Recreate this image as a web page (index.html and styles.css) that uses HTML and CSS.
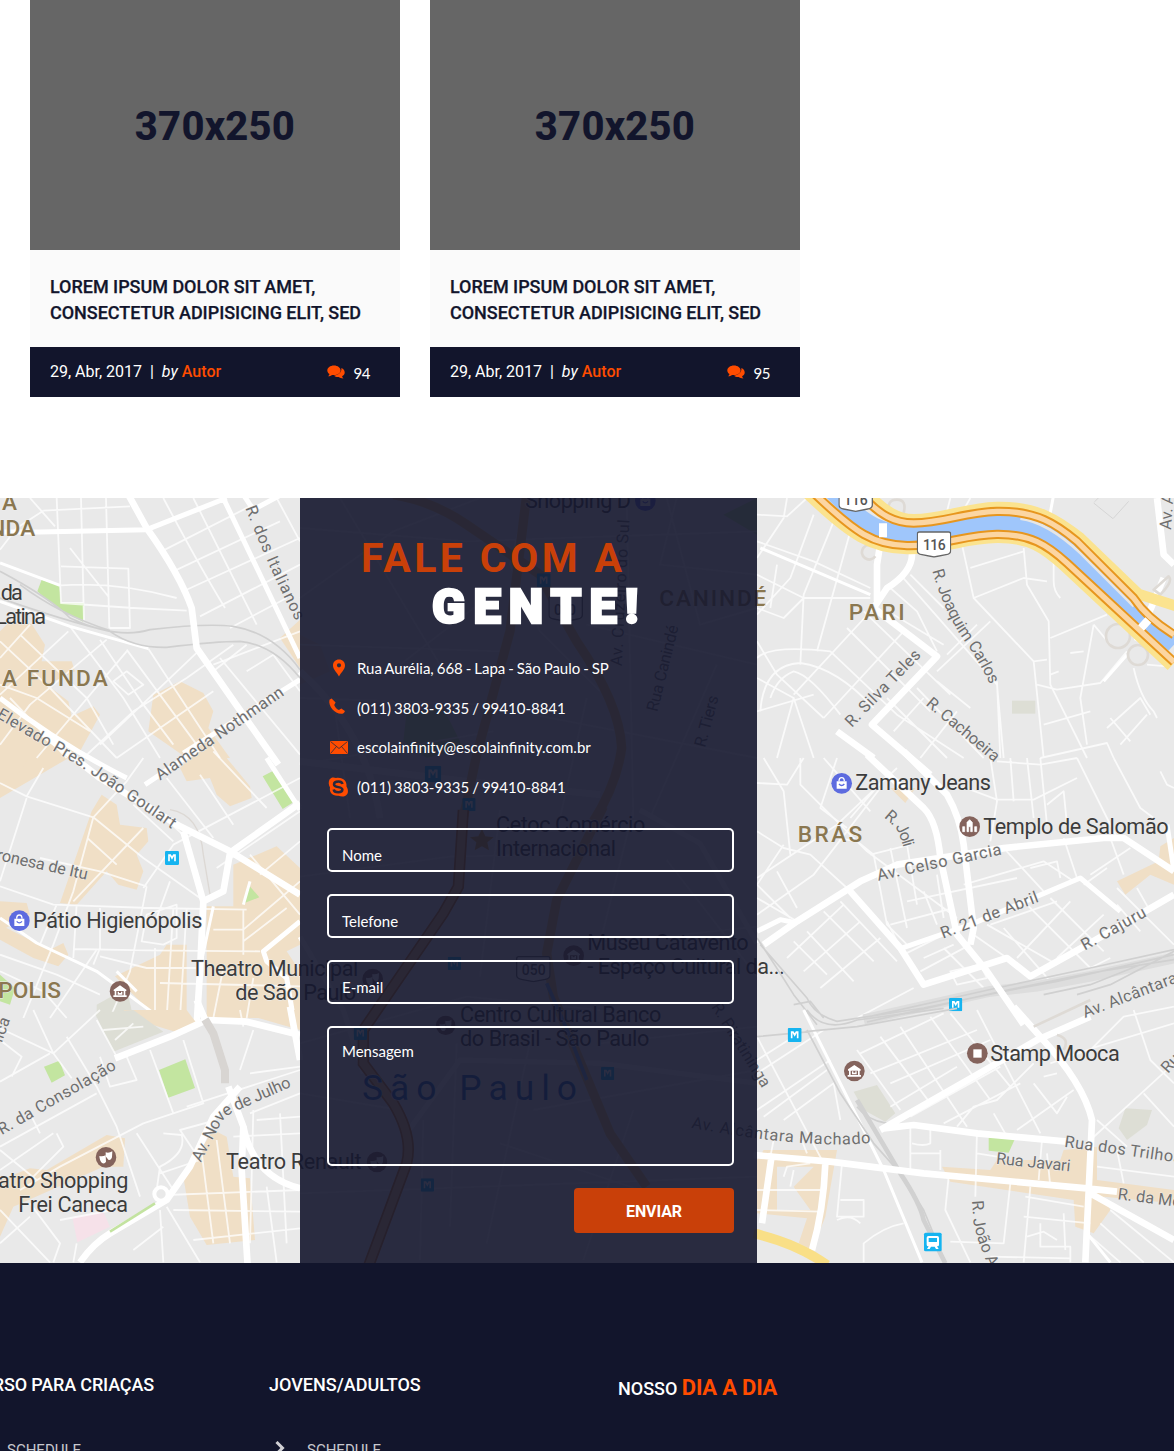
FILE: index.html
```html
<!DOCTYPE html>
<html lang="pt-BR">
<head>
<meta charset="utf-8">
<title>Escola Infinity</title>
<link rel="stylesheet" href="styles.css">
</head>
<body>
<svg class="defs" width="0" height="0">
  <symbol id="comments" viewBox="0 0 18 14"><path d="M7 .5C3.200.5.3 2.700.3 5.400c0 1.500.9 2.800 2.200 3.700-.2.900-.7 1.500-1.400 2.100 1.500 0 2.900-.5 4-1.300.6.1 1.200.2 1.900.2 3.700 0 6.600-2.100 6.600-4.700S10.700.5 7 .5z"/><path d="M14.400 3.100c.5 3.800-2.600 7-7.400 7.600 1.100.9 2.700 1.300 4.600 1.200 1.200.7 2.700 1.500 4.900 1.500-.8-.6-1.200-1.300-1.400-2.100 1.600-.8 2.600-2.100 2.600-3.700 0-2-1.300-3.600-3.300-4.500z"/></symbol>
  <symbol id="metro" viewBox="0 0 42 42"><rect width="42" height="42" rx="4" fill="#16b4f0"/><path d="M12 31V12h4l5 9 5-9h4v19" fill="none" stroke="#fff" stroke-width="5"/></symbol>
  <symbol id="museum" viewBox="0 0 64 64"><circle cx="32" cy="32" r="31" fill="#84635c"/><path d="M13 27 32 14l19 13v4h-3v13h4v5H12v-5h4V31h-3zM21 31v13h22V31z" fill="#fff" fill-rule="evenodd"/><path d="M25 33h4v4h6v-4h4v9H25z" fill="#fff"/></symbol>
  <symbol id="bag" viewBox="0 0 64 64"><circle cx="32" cy="32" r="31" fill="#5d6bdf"/><path d="M17 26h30v22H17z" fill="#fff"/><path d="M24 26q0-11 8-11t8 11" fill="none" stroke="#fff" stroke-width="4"/><path d="M24 34q8 9 16 0" fill="none" stroke="#5d6bdf" stroke-width="4"/></symbol>
  <symbol id="masks" viewBox="0 0 64 64"><circle cx="32" cy="32" r="31" fill="#84635c"/><path d="M31 17q10 3 20-3l-1 18q-3 10-11 7l-8-10z" fill="#fff"/><path d="M12 28q9 3 19-2l1 19q-4 8-12 4-7-6-8-21z" fill="#fff"/></symbol>
  <symbol id="shield116" viewBox="0 0 104 80"><path d="M8 3h88q6 0 6 6v50q0 10-14 12l-36 7-36-7Q2 69 2 59V9q0-6 6-6z" fill="#fff" stroke="#666" stroke-width="4"/></symbol>
</svg>

<section class="posts">
  <article class="post">
    <div class="post-image">370x250</div>
    <h3 class="post-title">LOREM IPSUM DOLOR SIT AMET,<br>CONSECTETUR ADIPISICING ELIT, SED</h3>
    <div class="post-meta">
      <span>29, Abr, 2017&nbsp; |&nbsp; <i>by</i> <b>Autor</b></span>
      <span class="count"><svg class="bubbles"><use href="#comments"/></svg>94</span>
    </div>
  </article>
  <article class="post">
    <div class="post-image">370x250</div>
    <h3 class="post-title">LOREM IPSUM DOLOR SIT AMET,<br>CONSECTETUR ADIPISICING ELIT, SED</h3>
    <div class="post-meta">
      <span>29, Abr, 2017&nbsp; |&nbsp; <i>by</i> <b>Autor</b></span>
      <span class="count"><svg class="bubbles"><use href="#comments"/></svg>95</span>
    </div>
  </article>
</section>

<section class="contact">
<svg class="map" viewBox="0 0 1174 765" width="1174" height="765">
  <!-- north west -->
  <g transform="scale(.33333)">
    <path class="beige" d="M0 400 30 370 95 378 135 440 125 490 215 490 225 520 140 560 205 610 215 655 280 625 300 650 240 760 0 900zM445 700 460 590 540 550 610 585 640 640 625 690 690 780 560 780zM840 420 900 365V510z"/>
    <path class="green" d="M125 245 178 262 183 315H251V372Q160 330 112 280z"/>
    <path class="r1" d="M170 0 183 315H251M243 0 252 372M318 0 328 390M183 205 385 212 390 390H328M183 262Q350 250 530 300M183 315 400 330 560 338M130 38 390 25M210 150Q280 240 325 295M90 0 165 85M0 155 50 90 130 38M490 0Q590 190 675 330M580 0 770 380M495 155 760 20M520 220 840 70M545 282 900 120M600 355 900 200M690 390 860 300M830 0 900 130M640 500 900 400"/>
    <path class="r1" d="M60 410 260 600 340 740M0 430 150 570 350 780M30 600 200 780M210 385 370 600 480 780M300 425 430 620 520 740M380 455 590 740M445 452 660 780M205 400 0 590M90 380 0 480M320 425 90 620 0 740M380 460 110 780M600 455 300 740M700 440 560 540 400 640 250 780M740 440 640 520M740 520 820 470 900 580M660 480 900 770M340 550 380 520 430 560 385 590zM640 580 480 690 350 780M0 560 110 600 270 700"/>
    <path class="r2" d="M0 195 180 262M0 310 210 385 445 452"/>
    <path class="rail" d="M0 220Q150 300 210 360 350 425 450 395 620 375 700 385 820 405 900 515M0 300Q200 370 330 400 400 450 500 448 650 430 720 430 820 440 900 540M60 260Q180 350 330 398"/>
    <path class="r3" d="M0 102H120L440 95 680 0M665 -10 900 480M730-10 760 35 900-40"/>
    <path class="r4" d="M385-10 440 90Q540 230 575 330L590 450Q680 580 835 800"/>
    <path class="r3" d="M550 765 900 545M0 600Q180 740 380 840"/>
  </g>
  <!-- west -->
  <g transform="translate(0 260) scale(.33333)">
    <path class="beige" d="M0 0H85L60 40 0 110zM275 160 305 110 350 140 360 200 440 210 445 250 410 290 430 340 410 395 355 380 320 340 230 440 180 435zM540 30 570 0H680L750 85 755 120 690 145 650 110 630 60 560 70zM0 430 80 435 90 470 0 520zM0 500 150 575 190 555 205 590 175 625 100 600 0 545zM700 320 830 265 900 330V560L860 580 900 640V780H620V445H700zM345 655 480 590 500 560 560 560V780H470L370 680z"/>
    <path class="green" d="M788 55 820 38 880 133 848 153zM748 383 778 418 726 438zM0 650 45 690 30 740 0 730z"/>
    <path class="park" d="M290 740 380 690 400 780H290z"/>
    <path class="r1" d="M0 75 80 115 280 178 430 300 600 420M80 120 0 370M80 115 130 30M280 178 220 400 160 560 70 780M280 178 380 70 430 0M430 210 220 430M262 240 350 320M0 385 160 440 450 450 740 455M440 385 300 340 120 300M430 390 520 260 900 60M520 250 400 140M560 240 450 140M640 240 500 60M700 200 600 50M800 150 640-20M650 330 900 160M780 350 900 250M750 290 900 470M170 440 120 560M230 440 220 600M300 450V570L280 620M440 385 390 640 330 780M510 370 470 480M520 450 500 780M465 570V780M560 450 540 780M220 573 440 577 780 580M300 595 440 630 600 630M730 455V590M640 515H730L900 370M730 550 860 450M480 675 900 685M0 590 170 650 300 710M0 640 130 700 200 780M640 780 670 630M740 780 760 660M150 780 290 575M425 550 440 470 530 440V540L490 560z"/>
    <path class="r2" d="M0 480 110 555 290 640 480 780M350 640 410 700M600 630 640 445M730 440 750 370"/>
    <path class="rail light" d="M510 155Q600 170 610 290L630 410"/>
    <path class="r4" d="M120-80 300 60 540 205 690 280 900 410M900 135 710 270 690 285 670 400 610 430M550 220 610 430 600 640 590 800"/>
    <path class="r3" d="M435 80 600-30M800 0 900 155M900 490 790 580 800 610 860 660 880 780"/>
    <use href="#metro" x="495" y="279" width="42" height="42"/><use href="#bag" x="26" y="456" width="64" height="64"/><use href="#museum" x="328" y="668" width="64" height="64"/>
  </g>
  <!-- south west -->
  <g transform="translate(0 512) scale(.33333)">
    <path class="beige" d="M370 0H560L590 40 540 70 410 30zM760 0H900V60L760 20zM0 510 90 475 140 480 320 375 375 385 370 470 310 470 40 590 0 680zM550 500 640 360 680 380 700 500 750 505 765 690 620 705 570 620z"/>
    <path class="green" d="M477 180 556 148 585 234 505 263zM132 170 178 152 195 196 155 218z"/>
    <path class="park" d="M285 10 400 0 490 65 340 125z"/><path d="M217 622 310 605 330 650 232 697z" fill="#f6e1e9"/>
    <path class="r1" d="M0 55 160 130 215 205M160 130 300 0M100 0 160 130M35 200 65 140 0 90M0 215 150 130M200 80 290 230 350 350 420 560M0 410 290 250M170 370 190 410 100 500M0 480 160 370M0 420 110 510M90 310 120 370M290 30 350 140M310 60 430 50M345 90 400 40M300 140 330 230 410 210 380 140M450 120 520 310M550 90 610 280 430 340 180 470 60 540M410 370 520 540M480 490 600 450 540 360 650 330M560 290 900 180M490 370 545 375Q560 430 480 470L470 540M500 555 900 540M520 600 900 605M580 690 900 655M640 700 600 390M690 700 650 390M760 300 750 700M840 310 860 700M770 330 900 320M700 380 900 370M90 580 180 700 160 757M0 600 150 757M180 630 340 600M230 700 220 757M480 600 490 757M490 650 400 720M500 590 600 757M800 530 830 757M720 180 760 60M730 50 720 0M750 190 900 170M750 310 900 250M0 700 90 620"/>
    <path class="r4" d="M240 757Q280 700 330 670L500 570 570 470 640 320 720 230M345 145 510 80 620 30 740 35 900 75M685 230 730 350 725 480 745 800"/>
    <path class="r4" d="M730 350Q760 500 900 535M590-30 620 40M870-10 900 150"/>
    <circle cx="483" cy="552" r="20" fill="#e9e9e9" stroke="#fff" stroke-width="12"/>
    <path d="M615 28 640 70 675 180V220" fill="none" stroke="#d8d5d2" stroke-width="24"/><path d="M330 665 465 580" stroke="#c3e3a0" stroke-width="8"/>
    <use href="#masks" x="286" y="410" width="64" height="64"/>
  </g>
  <!-- behind the form, north -->
  <g transform="translate(300 0) scale(.33333)">
    <path class="beige" d="M0 410 60 440 90 520 0 560z"/><path class="green" d="M320 640 430 630 490 750 380 780 310 730zM1270 50 1371 0V110z"/>
    <path class="r1" d="M0 90 500 130 1371 100M0 300 280 100 540 0M0 440 600 460M120 0 420 500M0 600 560 620M860 380 1371 500M680 0 630 200 720 400 900 580M980 0 1000 960M1100 0 1200 380 1371 330M700 650 1371 780M780 960 860 600M1050 960 1250 500M1130 0 1080 200 1371 230M0 800 580 700M150 960 100 600M300 500 560 300"/>
    <path class="r4" d="M0 520Q200 700 240 960M0 790 500 850 900 890"/>
    <path class="gold" d="M280-10Q400 10 500 80L720 230Q770 330 830 430 960 620 965 750 950 860 880 970M680-10 630 400 530 770 490 960"/>
    <use href="#metro" x="710" y="226" width="42" height="42"/><use href="#metro" x="374" y="803" width="50" height="50"/><use href="#metro" x="487" y="900" width="40" height="40"/><use href="#bag" x="1004" y="-24" width="64" height="64"/>
    <use href="#shield116" x="745" y="292" width="104" height="80"/>
    <text class="shield" x="762" y="350" textLength="66">050</text>
    <text class="poi" x="675" y="28" textLength="318">Shopping D</text>
    <text class="area" x="1078" y="324" textLength="325">CANINDÉ</text>
    <text class="road" transform="translate(965 505) rotate(-87)" textLength="440">Av. Cruzeiro do Sul</text>
    <text class="road" transform="translate(1072 643) rotate(-76)" textLength="265">Rua Canindé</text>
    <text class="road" transform="translate(1215 750) rotate(-75)" textLength="158">R. Tiers</text>
  </g>
  <!-- behind the form, south -->
  <g transform="translate(300 312) scale(.33333)">
    <path class="r1" d="M0 200 450 140 900 130M600 0 540 500M1000 0 900 400 1371 350M0 700 500 560 900 600M700 900 1371 780M450 1250 470 700M700 650 560 1300M0 1150 1371 1100M1100 150 1371 500M900 700 1371 650M1000 900 850 1350M370 930 360 1350M0 850 300 900M600 1000 1200 1200"/>
    <path class="r3" d="M0 380 130 600 190 790M320 970 480 750 900 760 1371 820M1020 0 1200 100 1371 400"/>
    <path d="M490 0 475 230 430 310 190 660V760L280 880Q340 980 320 1060L205 1370" fill="none" stroke="#c97720" stroke-width="34"/><path d="M490 0 475 230 430 310 190 660V760L280 880Q340 980 320 1060L205 1370" fill="none" stroke="#f4c27e" stroke-width="24"/>
    <path class="gold" d="M910-10 770 270 740 430 760 560 830 730 930 970 1040 1130"/>
    <path d="M740 520 810 680 860 810" fill="none" stroke="#79a9e8" stroke-width="11"/>
    <path d="m546 57 10 22 25 3-19 15 5 24-21-12-22 12 5-24-19-15 25-3z" fill="#d8a441"/>
    <use href="#metro" x="443" y="440" width="40" height="40"/><use href="#metro" x="161" y="650" width="40" height="40"/><use href="#metro" x="903" y="770" width="40" height="40"/><use href="#metro" x="362" y="1105" width="40" height="40"/>
    <use href="#museum" x="789" y="405" width="64" height="64"/><use href="#masks" x="186" y="475" width="64" height="64"/><use href="#masks" x="407" y="616" width="60" height="60"/><use href="#masks" x="199" y="1024" width="64" height="64"/>
    <use href="#shield116" x="648" y="437" width="104" height="80"/><text class="shield" x="665" y="494" textLength="72">050</text>
    <text class="poi" x="588" y="64" textLength="448">Cetoc Comércio</text><text class="poi" x="588" y="137" textLength="360">Internacional</text>
    <text class="poi" x="862" y="419" textLength="484">Museu Catavento</text><text class="poi" x="862" y="491" textLength="592">- Espaço Cultural da...</text>
    <text class="poi" x="480" y="635" textLength="604">Centro Cultural Banco</text><text class="poi" x="480" y="707" textLength="568">do Brasil - São Paulo</text>
    <text class="city" x="186" y="870" textLength="645">São Paulo</text>
    <text class="road" transform="translate(1233 590) rotate(58)" textLength="290">R. Piratininga</text>
  </g>
  <!-- north east -->
  <g transform="translate(757 0) scale(.33333)">
    <path class="r1" d="M90 0 80 60 0 180M0 50 90 55 150 0M230 70 140 290 130 500M170 50 100 240 0 350M280 100 180 460M0 230 140 300 340 300M0 430 60 530 200 660M60 200 40 330M340 270 170 190 0 130M110 590 350 330M200 660 440 400M0 480Q40 440 220 460L420 650 620 780M10 640Q20 500 130 495 240 510 350 630M40 600Q60 540 110 520 160 530 250 650M0 640 170 590M110 600 170 780M60 780 110 600 0 540M270 390 520 640M320 340 580 590M410 350 560 440M400 270 480 340 540 460M460 230 560 330M430 230 720 560 740 780M615 140 650 300 830 490 860 780M650 300 800 240 870 250M640 210 800 160M800 150 810 260 875 370 880 560 990 780M890 180V250Q890 280 910 300M880 420 1050 350M830 490 870 485M840 560 900 575 1030 555 1110 460M1010 380 970 600 990 740M1010 380 1060 440M860 680 1000 640M850 780 1050 735 1070 780M1130 510Q1150 600 1190 640L1200 660M720 550 730 780M540 520 700 370M480 570 680 780M390 600 570 780M500 600 410 700M600 640 490 780M570 470 660 380M540 550 640 630M1050 690 1150 600 1180 650M1090 740 1170 650M1060 660 1120 730M940 465 980 460M880 530 905 520M0 330 80 360 140 300M580 0 570 40M640 0 620 35M1170 500 1230 505"/>
    <path class="r2" d="M10 150 340 290M890-10 875 70M1110 470 1040 550"/>
    <path class="r4" d="M380 70 360 200V310M465 160Q470 220 390 270L350 330 540 475 345 680 520 830M240 700 350 780M1200 0 1220 170 1251 200M1220 240 1140 430"/>
    <circle class="ramp" cx="1083" cy="414" r="36"/><circle class="ramp" cx="1143" cy="471" r="30"/>
    <path class="ramp" d="M350 145A22 22 0 1 0 355 175M395 40Q390 5 420 5T440 45M1190 275 1235 235Q1250 250 1210 290z"/>
    <path d="M150-14C285 116 345 150 450 153 560 155 620 120 720 119 815 118 860 148 920 203L1243 504M312-37C382 48 430 64 470 64 560 64 620 30 720 27 845 25 910 72 970 120L1145 288 1260 325" fill="none" stroke="#fbe38f" stroke-width="32"/>
    <path d="M225-20C330 90 380 105 460 106 560 108 620 75 720 75 830 75 880 106 950 166L1251 440" fill="none" stroke="#9fc6fb" stroke-width="50"/>
    <path d="M790 62Q870 72 970 165L1130 325" fill="none" stroke="#e6e6e6" stroke-width="8"/>
    <path d="M165-20C300 110 350 140 450 143 560 145 620 110 720 109 820 108 870 140 930 195L1251 492M300-25C370 60 420 75 470 75 560 75 620 43 720 40 840 38 900 80 960 130L1130 300Q1170 360 1251 410" fill="none" stroke="#e7961e" stroke-width="28"/>
    <path d="M165-20C300 110 350 140 450 143 560 145 620 110 720 109 820 108 870 140 930 195L1251 492M300-25C370 60 420 75 470 75 560 75 620 43 720 40 840 38 900 80 960 130L1130 300Q1170 360 1251 410" fill="none" stroke="#fcd6a2" stroke-width="16"/>
    <path d="M378 76V118M1152 390 1174 366" stroke="#fff" stroke-width="24"/>
    <path d="m1012 12 20-20M1010 15 1068 62 1115 10" fill="none" stroke="#d5d5d5" stroke-width="3"/><path class="park" d="M765 608H835V647H765z"/>
    <use href="#shield116" x="244" y="-38" width="104" height="80"/><text class="shield" x="260" y="21" textLength="72">116</text>
    <use href="#shield116" x="479" y="99" width="104" height="80"/><text class="shield" x="498" y="156" textLength="68">116</text>
  </g>
  <!-- east -->
  <g transform="translate(757 260) scale(.33333)">
    <path class="beige" d="M400 90H475L445 135zM1080 370 1205 310 1210 265 1251 240V380L1180 350 1105 410z"/>
    <path class="r1" d="M20 0 80 100 100 290M0 75 90 80 140 0M0 220 80 270 160 290 270 390M0 360 240 200 420 30M130 0 130 80 210 160 330 280 600 480M200 0 340 160M240 0 190 150 270 210M370 90 170 350 0 470M80 260 0 380 100 480M240 240 300 250 350 290 390 500 450 560M60 340 120 450M340 290 460 260M400 270 450 510M450 260 480 440M500 400 540 500M280 180 400 40M0 420 120 490M110 550 210 650M150 520 290 670M200 460 350 610M250 430 420 610M90 600 260 440M140 640 310 490M190 690 370 540M400 500 590 450M450 430 780 360M390 490 430 570M620 380 860 310 950 370M700 0 720 130 700 250M720 10 850 20 960 0M640 95 720 125 830 125 960 60M810 0 830 180M850 0 870 200M960 0 1080 240M870 140 920 100 930 200M760 0 770 130M1070 0 1150 150 1190 180M1210 40 1230 80 1251 90M740 270 860 400M820 330 900 310 910 360M920 240 960 360M1060 240 1100 350M1000 350 1120 270M980 380 1050 330M690 500 900 620M650 530 750 600M700 500 900 430M740 510 880 670M810 440 1000 630M880 420 1040 580M900 600 1040 470M780 600 940 430M560 570 680 690M440 590 580 520M490 640 640 560M1000 630 1060 600M580 640 670 620 690 660 600 680zM300 780 470 690M500 600 590 560M1080 390 1251 560M1080 440 1150 520M1140 390 1180 460M560 480 540 350M620 300 900 250"/>
    <path d="M320 785 700 700 840 685 1000 655 1251 600" fill="none" stroke="#ddd" stroke-width="32"/>
    <path class="rail" d="M0 540Q60 630 110 710L180 800M10 560 150 720Q170 770 240 790L500 750 740 700 900 670 1251 590M340 775 720 690 1000 630 1251 575M860 710 1000 680 1150 620M960 710 1060 680 1251 580M110 740 160 730 200 780M330 792 710 705 1000 645 1251 605"/>
    <path class="r4" d="M330-10 500 150Q540 190 550 300L600 530 690 640 800 800M440-20 570 110Q610 180 620 260L650 510 640 560M20 560 120 490 310 370 420 320 740 270 1040 240 1100 240 1251 340M280 400 430 570 500 680 750 600 820 655 1000 555 1251 410"/>
    <path class="r3" d="M430 572 640 500 970 360 1090 460M0 520 70 485 120 495M1230 200 1251 340"/>
    <use href="#bag" x="222" y="44" width="64" height="64"/><use href="#metro" x="576" y="720" width="40" height="40"/>
    <circle cx="638" cy="206" r="31" fill="#84635c"/><path d="M617 221V206h6v15zM630 221V193l8-8 8 8V221h-5V206h-6V221zM653 221V206h6v15z" fill="#fff" stroke="#fff" stroke-width="2"/>
  </g>
  <!-- south east -->
  <g transform="translate(757 512) scale(.33333)">
    <path class="beige" d="M20 420H240L205 620 165 720 125 700 150 625 0 610V450zM60 470V600H160L110 530 170 470zM555 470 700 480 720 450 910 450 920 420 1020 410 1020 510 1251 540V580L1040 560 1060 600 1010 670 955 650 950 570 580 515z" fill-rule="evenodd"/>
    <path class="green" d="M695 384H775L755 428 695 422z"/><path class="park" d="M290 245 360 225 415 310 385 335 320 300zM1085 355 1105 295 1185 300 1170 345 1110 390z"/>
    <path class="r1" d="M0 190 200 60M0 150 110 80M0 300 220 150M0 80 200 460M20 320 210 180M80 330 230 220 250 330M300 120 430 300M370 80 520 280M430 50 630 350M520 20 700 270M580 10 760 230M660 0 850 370M310 130 560 10M340 190 660 60M400 220 700 90M400 290 600 170M460 320 730 170M560 340 790 220M600 350 650 290 720 270 830 160M710 310 750 380M780 360 950 240M830 220 900 310 930 260M860 200 900 190M880 160 1020 110 1251 40M990 130 1100 20 1251-10M1130 0 1180 150 1251 220M1251 160 1000 390M1160 250 1251 350M1020 330 1110 410M1080 420 1100 520M1020 470 1251 500M460 350V480M520 360V400Q500 410 465 400M550 420V480M460 430 550 430M660 360 655 560M660 430 720 440M855 390 845 510M870 430 880 530M575 500 565 600 640 757M760 520 740 700 580 695M820 530 800 757M800 620 1000 640M805 560 980 590M810 680 860 665 900 690M850 640V710H940V757M920 610 925 720M700 740 940 745M255 460 240 620 320 620V570H250M240 630Q280 610 310 640M320 757 320 700Q380 650 440 640M0 540H190M80 500 90 470 160 460M100 530 110 480M0 600 190 605M40 440 50 390M150 430 130 380M990 670 1090 757M1030 640 1160 757M1060 600 1251 757"/>
    <path class="r2" d="M140 0 380 480 495 757M990 670 1060 757"/>
    <path class="rail" d="M150 60 250 250 350 400 430 490 500 600 565 757M145 65 300 50 600-5M0 80 160 65M150 0Q200 70 300 30L560-5M300 290Q330 330 390 340"/>
    <path d="m300 270 130 220q60 90 70 140l65 130" fill="none" stroke="#d1d1d1" stroke-width="14"/>
    <path class="r4" d="M770-10 850 80Q980 220 1005 330L985 757M1000 20 840 90 650 200 370 360M380 355 470 345 660 370 930 395M-10 435 220 455 500 490 990 535 1080 545M1000 550 1251 690M45 430 15 640M205 460Q200 600 165 720"/>
    <path class="ramp" d="M900 75Q940 85 920 120M830 50 1000-30"/>
    <path d="M-10 670Q120 700 210 765" fill="none" stroke="#f9df87" stroke-width="29"/>
    <use href="#metro" x="92" y="54" width="42" height="42"/><use href="#museum" x="260" y="151" width="64" height="64"/>
    <circle cx="661" cy="130" r="31" fill="#84635c"/><path d="M649 118h25v25h-25z" fill="#fff"/>
    <rect x="501" y="668" width="53" height="56" rx="5" fill="#16b4f0"/><path d="M514 678h27q5 0 5 5v21q0 5-5 5h-1l5 8h-8l-4-7h-11l-4 7h-8l5-8h-1q-5 0-5-5v-21q0-5 5-5zm1 6v12h25v-12z" fill="#fff" fill-rule="evenodd"/>
  </g>

  <!-- labels -->
  <g transform="scale(.33333)">
    <text class="area" x="6" y="35">A</text><text class="area" x="-32" y="115" textLength="142">NDA</text><text class="area" x="6" y="565" textLength="321">A FUNDA</text>
    <text class="poi" x="2" y="304" textLength="66">da</text><text class="poi" x="-14" y="376" textLength="152">Latina</text>
    <path id="p1" d="M736 30Q800 195 892 380"/><text class="road"><textPath href="#p1" textLength="372">R. dos Italianos</textPath></text>
    <path id="p2" d="M-12 658 240 805 540 1010"/><text class="road"><textPath href="#p2" textLength="625">Elevado Pres. João Goulart</textPath></text>
    <text class="road" transform="translate(480 848) rotate(-34.5)" textLength="455">Alameda Nothmann</text>
  </g>
  <g transform="translate(0 260) scale(.33333)">
    <text class="road" transform="translate(-12 305) rotate(12.500)" textLength="278">ronesa de Itu</text>
    <text class="poi" x="99" y="508" textLength="508">Pátio Higienópolis</text><text class="area" x="-5" y="719" textLength="192">POLIS</text>
    <text class="poi" x="573" y="651" textLength="502">Theatro Municipal</text><text class="poi" x="706" y="723" textLength="362">de São Paulo</text>
  </g>
  <g transform="translate(0 512) scale(.33333)">
    <text class="road" transform="translate(5 100) rotate(-70)">lica</text>
    <text class="road" transform="translate(5 376) rotate(-30)" textLength="400">R. da Consolação</text>
    <path id="p3" d="M602 458 660 345Q675 315 715 300L930 205"/><text class="road"><textPath href="#p3" textLength="375">Av. Nove de Julho</textPath></text>
    <text class="poi" x="-6" y="532" textLength="391">atro Shopping</text><text class="poi" x="55" y="604" textLength="329">Frei Caneca</text><text class="poi" x="678" y="474" textLength="407">Teatro Renault</text>
  </g>
  <g transform="translate(757 0) scale(.33333)">
    <text class="area" x="275" y="366" textLength="172">PARI</text>
    <path id="p4" d="M526 218Q560 340 620 425T712 590"/><text class="road"><textPath href="#p4" textLength="385">R. Joaquim Carlos</textPath></text>
    <text class="road" transform="translate(284 690) rotate(-46)" textLength="302">R. Silva Teles</text>
    <text class="road" transform="translate(505 620) rotate(40)" textLength="270">R. Cachoeira</text>
    <text class="road" transform="translate(1242 96) rotate(-86)">Av. A</text>
  </g>
  <g transform="translate(757 260) scale(.33333)">
    <text class="poi" x="295" y="95" textLength="407">Zamany Jeans</text><text class="poi" x="679" y="225" textLength="556">Templo de Salomão</text><text class="area" x="122" y="252" textLength="198">BRÁS</text>
    <path id="p5" d="M380 178 415 208Q432 232 450 310"/><text class="road"><textPath href="#p5" textLength="112">R. Joli</textPath></text>
    <text class="road" transform="translate(364 368) rotate(-12)" textLength="380">Av. Celso Garcia</text>
    <text class="road" transform="translate(558 542) rotate(-21)" textLength="310">R. 21 de Abril</text>
    <text class="road" transform="translate(983 578) rotate(-29)" textLength="215">R. Cajuru</text>
    <text class="road" transform="translate(984 780) rotate(-21)" textLength="300">Av. Alcântara</text>
  </g>
  <g transform="translate(757 512) scale(.33333)">
    <text class="poi" x="700" y="150" textLength="388">Stamp Mooca</text>
    <path id="p6" d="M-198 353Q20 395 190 402 290 408 380 393"/><text class="road"><textPath href="#p6" textLength="543">Av. Alcântara Machado</textPath></text>
    <text class="road" transform="translate(921 410) rotate(8)" textLength="355">Rua dos Trilhos</text><text class="road" transform="translate(716 461) rotate(6)" textLength="224">Rua Javari</text>
    <text class="road" transform="translate(1081 568) rotate(7)">R. da Mooca</text><text class="road" transform="translate(1233 192) rotate(-48)">Rua</text>
    <path id="p7" d="M645 572 650 640Q665 710 705 790"/><text class="road"><textPath href="#p7">R. João A</textPath></text>
  </g>
</svg>

<div class="panel">
  <h2 class="heading"><span class="top">FALE COM A</span><span class="bottom">GENTE!</span></h2>
  <ul class="info">
    <li><svg viewBox="0 0 22 22"><path d="M12 2.500c-3.500 0-6 2.600-6 5.900 0 4 4.300 7.300 6 11.100 1.700-3.800 6-7.100 6-11.100 0-3.300-2.500-5.900-6-5.900zm0 3.700a2.100 2.100 0 1 1 0 4.200 2.100 2.100 0 0 1 0-4.200z"/></svg><span>Rua Aurélia, 668 - Lapa - São Paulo - SP</span></li>
    <li><svg viewBox="0 0 22 22"><path d="M4.600 2.600 2.500 3.700C.8 10.300 8.400 18.600 15.200 17.800c1.300-.3 2.500-1.500 2.700-2.900l-3.600-2.400-2.400 1.500c-2.200-.8-4-2.900-4.700-5L8.600 6.400z"/></svg><span>(011) 3803-9335 / 99410-8841</span></li>
    <li><svg viewBox="0 0 22 22"><path d="M3 5h18v13H3z"/><path d="m3.500 5.500 8.500 7 8.500-7M3.500 17.500l6-7M20.500 17.500l-6-7" fill="none" stroke="#28293f" stroke-width=".8"/></svg><span>escolainfinity@escolainfinity.com.br</span></li>
    <li><svg viewBox="0 0 22 22"><path d="M2.500 3.500C4 1 7 1 9 2c7-1 11 3 10.500 8.500 2.500 4 2 9-3 10-2 .3-3.500-.3-5-.8C5.500 20.500 2 16 3 11.500 1.500 9 1.300 6 2.500 3.500z"/><path d="M15.500 8C15 6 13 5.500 11.500 5.500 9 5.500 7 6.600 7 8.400c0 3.700 8.400 1.800 8.400 5.200 0 1.700-1.900 2.700-4.200 2.700-2 0-4.200-.8-4.500-2.800" fill="none" stroke="#28293f" stroke-width="2.500"/></svg><span>(011) 3803-9335 / 99410-8841</span></li>
  </ul>
  <form class="form">
    <div class="field">Nome</div>
    <div class="field">Telefone</div>
    <div class="field">E-mail</div>
    <div class="field area-field">Mensagem</div>
    <button class="send" type="button">ENVIAR</button>
  </form>
</div>
</section>

<footer class="footer">
  <div class="col first"><h4>CURSO PARA CRIAÇAS</h4><p>SCHEDULE</p></div>
  <div class="col second"><h4>JOVENS/ADULTOS</h4><p><svg viewBox="0 0 10 14"><path d="m1.500 1 6 6-6 6" fill="none" stroke="#d0d0d4" stroke-width="3"/></svg>SCHEDULE</p></div>
  <div class="col third"><h4>NOSSO <b>DIA A DIA</b></h4></div>
</footer>
</body>
</html>
```
FILE: styles.css
```css
* { box-sizing: border-box; }
html { overflow: hidden; }
body { margin: 0; width: 1174px; height: 1451px; overflow: hidden; background: #fff; font-family: Roboto, "Liberation Sans", sans-serif; }
h2, h3, h4, p, ul { margin: 0; padding: 0; }
.defs { display: block; }

.posts { display: flex; gap: 30px; padding-left: 30px; height: 498px; align-items: flex-start; }
.post { width: 370px; background: #fafafa; color: #12152c; }
.post-image { height: 250px; padding-top: 2px; background: #666; display: flex; align-items: center; justify-content: center; font-size: 40px; font-weight: 800; letter-spacing: .2px; }
.post-title { height: 97px; padding: 24px 20px 0; font-size: 18px; line-height: 26px; font-weight: 500; letter-spacing: -.03px; white-space: nowrap; -webkit-text-stroke: .25px; }
.post-meta { height: 50px; background: #12152c; color: #fff; display: flex; justify-content: space-between; align-items: center; padding: 0 30px 2px 20px; font-size: 16px; }
.post-meta b { color: #ff4c00; font-weight: 500; }
.count { display: flex; align-items: center; font-family: Lato, sans-serif; font-size: 15px; letter-spacing: -.4px; padding-top: 4px; }
.bubbles { width: 18px; height: 14px; margin: -3px 8px 0 0; fill: #ff4c00; }

.contact { height: 765px; display: grid; background: #e9e9e9; overflow: hidden; }
.map, .panel { grid-area: 1 / 1; }
.map { display: block; }
.map text { font-family: Roboto, sans-serif; paint-order: stroke; stroke: #eee; stroke-width: 3px; stroke-linejoin: round; }
.map [id^="p"] { fill: none; }
.map textPath { fill: #6f6f6f; }
.beige { fill: #f0dfc6; }
.green { fill: #c3e5a0; }
.park { fill: #ddded5; }
.r1, .r2, .r3, .r4, .rail, .gold, .ramp { fill: none; stroke: #fff; stroke-linejoin: round; }
.r1 { stroke-width: 5.5px; opacity: .75; }
.r2 { stroke-width: 9px; }
.r3 { stroke-width: 15px; }
.r4 { stroke-width: 20px; }
.rail { stroke: #d0d0d0; stroke-width: 5px; }
.rail.light { stroke: #dcd8d4; stroke-width: 4px; }
.gold { stroke: #e6c47a; stroke-width: 28px; }
.ramp { stroke: #dedad5; stroke-width: 8px; }
.road { font-size: 49px; fill: #6f6f6f; }
.poi { font-size: 65px; fill: #3c3c3c; transform: translateY(2px); }
.area { font-size: 68px; font-weight: 500; letter-spacing: 4px; fill: #8a7750; }
.city { font-size: 106px; fill: #1c62b8; }
.map .shield { font-size: 42px; font-weight: 500; fill: #555; stroke: none; }

.panel { width: 457px; margin-left: 300px; padding: 38px 23px 0 27px; background: rgba(20, 22, 45, .9); z-index: 1; color: #fff; }
.heading { height: 112px; display: flex; flex-direction: column; white-space: nowrap; }
.top { padding-left: 34px; font-size: 41px; line-height: 44px; font-weight: 700; letter-spacing: 3.400px; color: #c94009; }
.bottom { padding-left: 105px; font-size: 49px; line-height: 54px; font-weight: 900; letter-spacing: 8px; -webkit-text-stroke: 2.500px #fff; }
.info { list-style: none; font: 15px/39.670px Lato, sans-serif; word-spacing: -.9px; }
.info li { height: 39.670px; display: flex; align-items: center; white-space: nowrap; }
.info span { padding-top: 2px; }
.info svg { width: 22px; height: 22px; margin-right: 8px; fill: #ff4c00; }
.form { display: flex; flex-direction: column; gap: 22px; padding-top: 21px; font: 15px/18px Lato, sans-serif; }
.field { height: 44px; border: 2px solid #fff; border-radius: 5px; padding: 16px 13px 0; }
.area-field { height: 140px; padding-top: 14px; }
.send { align-self: flex-end; width: 160px; height: 45px; border: 0; border-radius: 4px; background: #c94009; color: #fff; font: 700 16px Roboto, sans-serif; letter-spacing: -.1px; padding: 2px 0 0; }

.footer { height: 188px; background: #12152c; color: #fff; display: grid; grid-template-columns: 269px 349px 1fr; padding-top: 111px; overflow: hidden; white-space: nowrap; }
.footer h4 { font-size: 18px; line-height: 22px; font-weight: 500; }
.footer p { font-size: 15px; line-height: 18px; color: #c8c8ce; margin-top: 45px; }
.first { display: flex; flex-direction: column; }
.first h4 { width: 154px; direction: rtl; letter-spacing: -.15px; }
.first p { padding-left: 7px; }
.second p { display: flex; padding-left: 6px; }
.second svg { width: 10px; height: 14px; margin-right: 22px; }
.third h4 { padding-top: 3px; }
.third b { font-size: 22px; color: #ff4c00; font-weight: 700; letter-spacing: -.2px; }
```
